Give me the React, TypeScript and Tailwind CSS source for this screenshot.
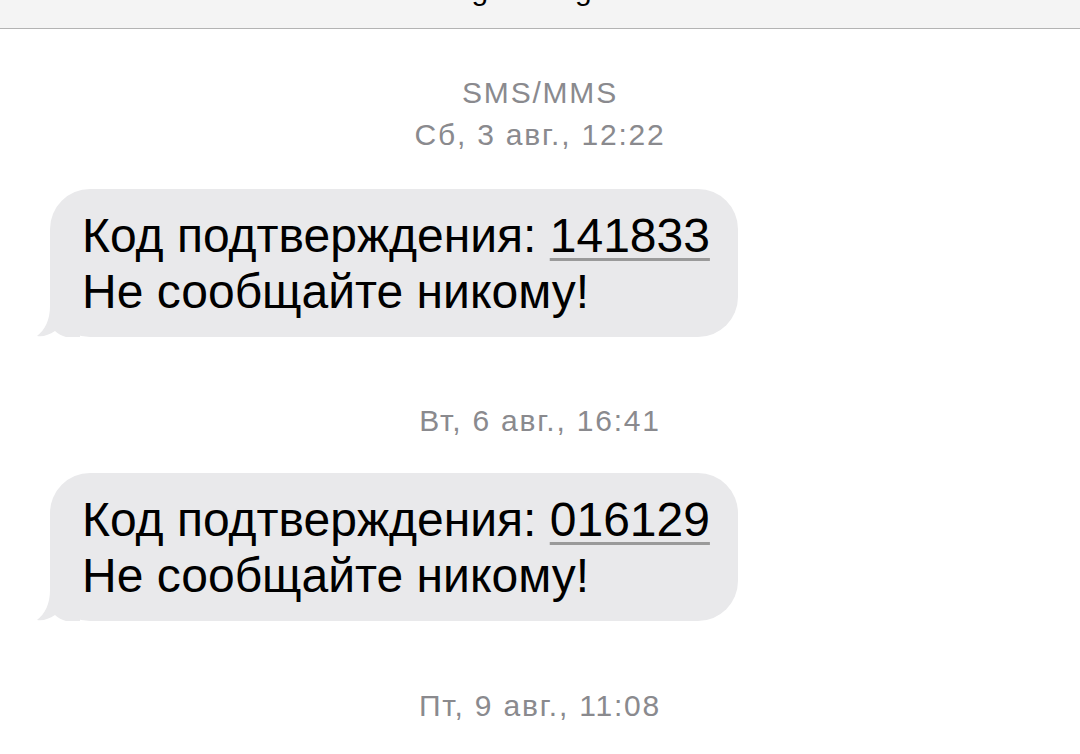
import React from 'react';

const FONT = { fontFamily: '"Liberation Sans", Arial, sans-serif' };

function Stamp({ children }: { children: React.ReactNode }) {
  return (
    <div
      className="text-center text-[30px] leading-[42px] tracking-[1.8px] text-[#8a8a8e]"
      style={FONT}
    >
      {children}
    </div>
  );
}

function Tail() {
  return (
    <svg
      className="absolute left-[-14px] bottom-0"
      width="44"
      height="43"
      viewBox="0 0 44 43"
    >
      <path
        d="M14 0 H44 V43 H30 C26 42 22 40 19 37 C13 41 7 43 1 42 C9 36 14 26 14 12 Z"
        fill="#e9e9eb"
      />
    </svg>
  );
}

function Bubble({ code }: { code: string }) {
  return (
    <div className="relative ml-[50px] w-[688px] rounded-[40px] bg-[#e9e9eb] pl-[32px] pr-[20px] pt-[19px] pb-[17px]">
      <Tail />
      <p className="relative text-[48px] leading-[56px] text-black whitespace-nowrap" style={FONT}>
        Код подтверждения:{' '}
        <span className="underline decoration-[#9a9a9a] decoration-[2.5px] underline-offset-[6px]">
          {code}
        </span>
        <br />
        Не сообщайте никому!
      </p>
    </div>
  );
}

export default function App() {
  return (
    <div className="w-[1080px] h-[754px] overflow-hidden bg-white">
      {/* nav bar, mostly scrolled off */}
      <div className="h-[29px] overflow-hidden border-b-[1.5px] border-[#b3b3b3] bg-[#f4f4f4]">
        <div
          className="-mt-[25px] flex justify-center pr-[10px] text-[30px] leading-[30px] text-black"
          style={FONT}
        >
          gosuslugi
        </div>
      </div>

      <div className="pt-[43px]">
        <Stamp>SMS/MMS</Stamp>
        <Stamp>Сб, 3 авг., 12:22</Stamp>
      </div>

      <div className="mt-[33px]">
        <Bubble code="141833" />
      </div>

      <div className="mt-[63px]">
        <Stamp>Вт, 6 авг., 16:41</Stamp>
      </div>

      <div className="mt-[31px]">
        <Bubble code="016129" />
      </div>

      <div className="mt-[64px]">
        <Stamp>Пт, 9 авг., 11:08</Stamp>
      </div>
    </div>
  );
}
